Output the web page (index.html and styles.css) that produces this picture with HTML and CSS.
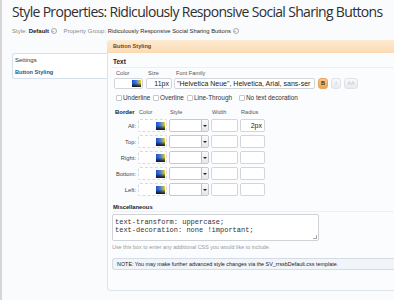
FILE: index.html
```html
<!DOCTYPE html>
<html lang="en">
<head>
    <meta charset="UTF-8">
    <title>Style Properties</title>
    <link rel="stylesheet" href="styles.css">
</head>
<body>
    <div class="page">
        <h1 class="title">Style Properties: Ridiculously Responsive Social Sharing Buttons</h1>
        <div class="crumbs">
            <span class="muted">Style:</span> <b>Default</b> <span class="drop"></span>
            <span class="muted gap">Property Group:</span> <span class="group">Ridiculously Responsive Social Sharing Buttons</span> <span class="drop"></span>
        </div>

        <div class="layout">
            <ul class="sidebar">
                <li>Settings</li>
                <li class="active">Button Styling</li>
            </ul>

            <div class="main">
                <div class="tab">Button Styling</div>
                <div class="panel">
                    <h3 class="section">Text</h3>
                    <div class="text-row">
                        <div class="field">
                            <span class="lbl">Color</span>
                            <span class="input color-in"><span class="swatch"></span></span>
                        </div>
                        <div class="field">
                            <span class="lbl">Size</span>
                            <span class="input size-in">11px</span>
                        </div>
                        <div class="field">
                            <span class="lbl">Font Family</span>
                            <span class="input font-in">"Helvetica Neue", Helvetica, Arial, sans-ser</span>
                        </div>
                        <div class="styles">
                            <span class="sbtn on">B</span>
                            <span class="sbtn ital">I</span>
                            <span class="sbtn wide">AA</span>
                        </div>
                    </div>
                    <div class="checks">
                        <label class="c1"><span class="box"></span>Underline</label>
                        <label class="c2"><span class="box"></span>Overline</label>
                        <label class="c3"><span class="box"></span>Line-Through</label>
                        <label><span class="box"></span>No text decoration</label>
                    </div>

                    <div class="border-grid">
                        <span class="head first">Border</span>
                        <span class="head">Color</span>
                        <span class="head">Style</span>
                        <span class="head">Width</span>
                        <span class="head">Radius</span>

                        <span class="side">All:</span>
                        <span class="input color-in dash"><span class="swatch"></span></span>
                        <span class="input sel"><span class="arrow"></span></span>
                        <span class="input"></span>
                        <span class="input num">2px</span>

                        <span class="side">Top:</span>
                        <span class="input color-in dash"><span class="swatch"></span></span>
                        <span class="input sel"><span class="arrow"></span></span>
                        <span class="input"></span>
                        <span class="input"></span>

                        <span class="side">Right:</span>
                        <span class="input color-in dash"><span class="swatch"></span></span>
                        <span class="input sel"><span class="arrow"></span></span>
                        <span class="input"></span>
                        <span class="input"></span>

                        <span class="side">Bottom:</span>
                        <span class="input color-in dash"><span class="swatch"></span></span>
                        <span class="input sel"><span class="arrow"></span></span>
                        <span class="input"></span>
                        <span class="input"></span>

                        <span class="side">Left:</span>
                        <span class="input color-in dash"><span class="swatch"></span></span>
                        <span class="input sel"><span class="arrow"></span></span>
                        <span class="input"></span>
                        <span class="input"></span>
                    </div>

                    <h3 class="section misc">Miscellaneous</h3>
                    <div class="textarea">text-transform: uppercase;<br>text-decoration: none !important;<span class="grip"></span></div>
                    <p class="hint">Use this box to enter any additional CSS you would like to include.</p>
                    <div class="note">NOTE: You may make further advanced style changes via the SV_rrssbDefault.css template.</div>
                </div>
            </div>
        </div>
    </div>
</body>
</html>
```

FILE: styles.css
```css
html, body {
    margin: 0;
    height: 100%;
    overflow: hidden;
}

body {
    font-family: 'Liberation Sans', Arial, sans-serif;
    color: #333;
    background: #fafbfd;
    border-left: 2px solid #d6d6d6;
}

.page {
    padding-left: 10px;
}

.title {
    margin: 0;
    padding-top: 2px;
    height: 20px;
    font-family: 'Open Sans', sans-serif;
    font-weight: normal;
    font-size: 14px;
    line-height: 20px;
    color: #2f2f2f;
    letter-spacing: -0.68px;
    white-space: nowrap;
}

.crumbs {
    margin-top: 2px;
    height: 14px;
    font-size: 6px;
    line-height: 14px;
    color: #222;
    white-space: nowrap;
}

.crumbs b {
    font-weight: bold;
}

.muted {
    color: #8a8a8a;
}

.gap {
    margin-left: 5px;
}

.group {
    font-size: 5.8px;
    color: #2a2a2a;
}

.drop {
    display: inline-block;
    width: 4px;
    height: 4px;
    border: 1px solid #aaa;
    border-radius: 50%;
    vertical-align: -1px;
    position: relative;
}

.drop::after {
    content: '';
    position: absolute;
    left: 0.5px;
    top: 1.5px;
    border-left: 1.5px solid transparent;
    border-right: 1.5px solid transparent;
    border-top: 1.5px solid #888;
}

.layout {
    display: flex;
    margin-top: 2px;
}

.sidebar {
    list-style: none;
    margin: 13px 0 0;
    padding: 0;
    width: 94px;
    height: 24px;
    background: #fff;
    border: 1px solid #d5e0ec;
    border-right: none;
    border-radius: 3px 0 0 3px;
    font-size: 6px;
}

.sidebar li {
    height: 12px;
    line-height: 12px;
    padding-left: 2px;
    color: #333;
}

.sidebar li.active {
    color: #24578c;
    font-weight: bold;
    font-size: 5.6px;
}

.main {
    flex: 1;
}

.tab {
    height: 13px;
    line-height: 13px;
    padding-left: 6px;
    font-size: 5.6px;
    font-weight: bold;
    color: #7a3f0c;
    background: linear-gradient(#fdebd3, #fbdab2);
    border-radius: 3px 0 0 0;
}

.panel {
    height: 238px;
    box-sizing: border-box;
    padding: 3px 0 0 4px;
    background: #fbfcfe;
    border: 1px solid #dfe3ea;
    border-top: none;
    border-right: none;
    border-radius: 0 0 0 4px;
    font-size: 6px;
}

.section {
    margin: 0;
    height: 11px;
    line-height: 12px;
    padding-left: 1px;
    font-size: 6.5px;
    font-weight: bold;
    color: #222;
    border-bottom: 1px solid #eceff4;
}

.text-row {
    display: flex;
    align-items: flex-end;
    margin-top: 1px;
    padding-left: 2px;
}

.field {
    display: flex;
    flex-direction: column;
    margin-right: 3px;
}

.field:nth-child(2) {
    margin-right: 2px;
}

.lbl {
    height: 9px;
    line-height: 9px;
    color: #555;
    padding-left: 2px;
    font-size: 5.6px;
}

.input {
    display: block;
    box-sizing: border-box;
    height: 11px;
    background: #fff;
    border: 1px solid #d2d5da;
    border-radius: 2px;
    position: relative;
    font-size: 7px;
    line-height: 9px;
    color: #222;
    white-space: nowrap;
    overflow: hidden;
}

.color-in {
    width: 29px;
}

.swatch {
    position: absolute;
    right: 1px;
    top: 1px;
    width: 9px;
    height: 7px;
    background: linear-gradient(#00000000 40%, #111 100%), linear-gradient(90deg, #1d4fd8, #3a7de0 45%, #f2d21a);
}

.size-in {
    width: 26px;
    text-align: right;
    padding-right: 2px;
}

.font-in {
    width: 141px;
    padding-left: 2px;
}

.styles {
    display: flex;
    gap: 3px;
}

.sbtn {
    height: 11px;
    width: 10px;
    box-sizing: border-box;
    border-radius: 3px;
    border: 1px solid #dfe2e6;
    background: linear-gradient(#fafafa, #e8eaee);
    font-size: 5.5px;
    line-height: 9px;
    text-align: center;
    color: #c3c7ce;
}

.sbtn.on {
    background: linear-gradient(#fbc98a, #f1a34e);
    border-color: #e6a663;
    color: #3d2a10;
    font-weight: bold;
}

.sbtn.ital {
    font-style: italic;
}

.sbtn.wide {
    width: 14px;
}

.checks {
    display: flex;
    margin-top: 4px;
    padding-left: 4px;
    height: 9px;
    align-items: center;
    font-size: 6.4px;
    color: #333;
}

.checks label {
    display: flex;
    align-items: center;
    gap: 1px;
}

.checks .c1 {
    width: 37px;
}

.checks .c2 {
    width: 34px;
}

.checks .c3 {
    width: 52px;
}

.box {
    width: 4px;
    height: 4px;
    border: 1px solid #c4c7cc;
    border-radius: 1px;
    background: #fff;
}

.border-grid {
    display: grid;
    grid-template-columns: 24px 29px 40px 27px 25px;
    grid-template-rows: 8px;
    grid-auto-rows: 13px;
    column-gap: 2px;
    row-gap: 3px;
    margin-top: 6px;
    align-items: center;
}

.head {
    color: #555;
    font-size: 5.6px;
    line-height: 8px;
    padding-left: 1px;
}

.head.first {
    font-weight: bold;
    font-size: 6px;
    color: #222;
    padding-left: 3px;
}

.side {
    text-align: right;
    color: #444;
    font-size: 5.8px;
}

.border-grid .input {
    height: 13px;
}

.border-grid .swatch {
    height: 8px;
    top: 2px;
}

.dash {
    border: 1px dashed #d7d9dd;
}

.sel {
    border-color: #c5c8cd;
}

.arrow {
    position: absolute;
    right: 0;
    top: 0;
    bottom: 0;
    width: 6px;
    background: linear-gradient(#fafafa, #e4e6ea);
    border-left: 1px solid #bfc2c7;
}

.arrow::after {
    content: '';
    position: absolute;
    left: 1px;
    top: 5px;
    border-left: 2px solid transparent;
    border-right: 2px solid transparent;
    border-top: 2px solid #222;
}

.num {
    text-align: right;
    padding-right: 2px;
    line-height: 11px;
}

.misc {
    margin-top: 6px;
    height: 9px;
    line-height: 10px;
    font-size: 5.8px;
    color: #222;
}

.textarea {
    position: relative;
    width: 207px;
    height: 27px;
    box-sizing: border-box;
    margin-top: 2px;
    padding: 3px 2px;
    background: #fff;
    border: 1px solid #cfd2d6;
    border-radius: 2px;
    font-family: 'Liberation Mono', monospace;
    font-size: 7px;
    line-height: 8px;
    color: #333;
}

.grip {
    position: absolute;
    right: 1px;
    bottom: 1px;
    width: 3px;
    height: 3px;
    border-right: 1px solid #aaa;
    border-bottom: 1px solid #aaa;
}

.hint {
    margin: 2px 0 0;
    height: 8px;
    line-height: 8px;
    font-size: 5.4px;
    color: #9a9a9a;
}

.note {
    margin-top: 7px;
    height: 12px;
    box-sizing: border-box;
    padding-left: 4px;
    line-height: 10px;
    background: #f1f4f9;
    border: 1px solid #d5dce6;
    border-right: none;
    border-radius: 3px 0 0 3px;
    font-size: 5.4px;
    color: #222;
    white-space: nowrap;
}
```
